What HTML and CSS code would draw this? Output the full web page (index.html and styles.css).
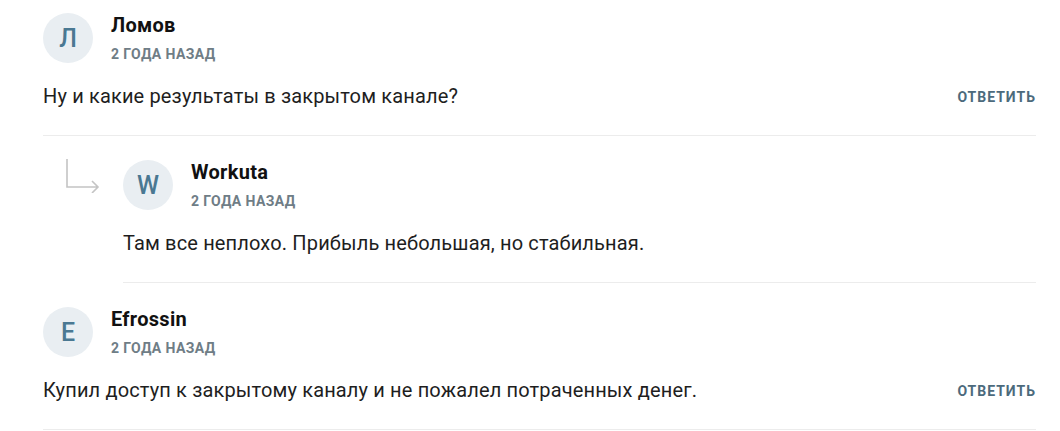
FILE: index.html
```html
<!DOCTYPE html>
<html lang="ru">
<head>
<meta charset="utf-8">
<link rel="stylesheet" href="styles.css">
</head>
<body>
<div class="comments">
  <div class="comment first">
    <div class="head">
      <div class="avatar">Л</div>
      <div class="meta">
        <div class="name">Ломов</div>
        <div class="date">2 года назад</div>
      </div>
    </div>
    <div class="body">
      <p class="text">Ну и какие результаты в закрытом канале?</p>
      <a class="reply">Ответить</a>
    </div>
  </div>
  <div class="thread">
    <div class="arrow">
      <svg width="36" height="36" viewBox="0 0 36 36"><path d="M3 2 V30 H34 M28 24 L34 30 L28 36" fill="none" stroke="#c4c4c4" stroke-width="1.6"/></svg>
    </div>
    <div class="comment">
      <div class="head">
        <div class="avatar">W</div>
        <div class="meta">
          <div class="name">Workuta</div>
          <div class="date">2 года назад</div>
        </div>
      </div>
      <div class="body">
        <p class="text">Там все неплохо. Прибыль небольшая, но стабильная.</p>
      </div>
    </div>
  </div>
  <div class="comment">
    <div class="head">
      <div class="avatar">E</div>
      <div class="meta">
        <div class="name">Efrossin</div>
        <div class="date">2 года назад</div>
      </div>
    </div>
    <div class="body">
      <p class="text">Купил доступ к закрытому каналу и не пожалел потраченных денег.</p>
      <a class="reply">Ответить</a>
    </div>
  </div>
</div>
</body>
</html>
```
FILE: styles.css
```css
html, body {
  margin: 0;
  background: #fff;
}
body {
  font-family: Roboto, "Noto Sans", Arial, sans-serif;
  color: #1e1e1e;
}
.comments {
  padding: 0 24px 0 43px;
}
.comment {
  padding: 24px 0 25px;
  border-bottom: 1px solid #ececec;
  flex: 1;
}
.comment.first {
  padding-top: 13px;
}
.head {
  display: flex;
  align-items: flex-start;
  gap: 18px;
}
.avatar {
  width: 50px;
  height: 50px;
  border-radius: 50%;
  background: #e9eef2;
  color: #4a7892;
  font-size: 25px;
  font-weight: 500;
  display: flex;
  align-items: center;
  justify-content: center;
  flex-shrink: 0;
}
.name {
  font-size: 20px;
  font-weight: 700;
  line-height: 24px;
  letter-spacing: 0.3px;
  color: #111;
}
.date {
  margin-top: 10px;
  font-size: 14px;
  font-weight: 700;
  color: #6f7d86;
  text-transform: uppercase;
  letter-spacing: 0.4px;
  line-height: 14px;
}
.body {
  display: flex;
  justify-content: space-between;
  align-items: center;
  margin-top: 19px;
}
.text {
  margin: 0;
  font-size: 20px;
  line-height: 28px;
  letter-spacing: 0.15px;
}
.reply {
  font-size: 14px;
  font-weight: 700;
  color: #4c6a7c;
  text-transform: uppercase;
  letter-spacing: 1px;
  margin-top: 2px;
}
.thread {
  display: flex;
}
.arrow {
  width: 80px;
  flex-shrink: 0;
  padding: 21px 0 0 21px;
  box-sizing: border-box;
}
.arrow svg {
  display: block;
}
```
